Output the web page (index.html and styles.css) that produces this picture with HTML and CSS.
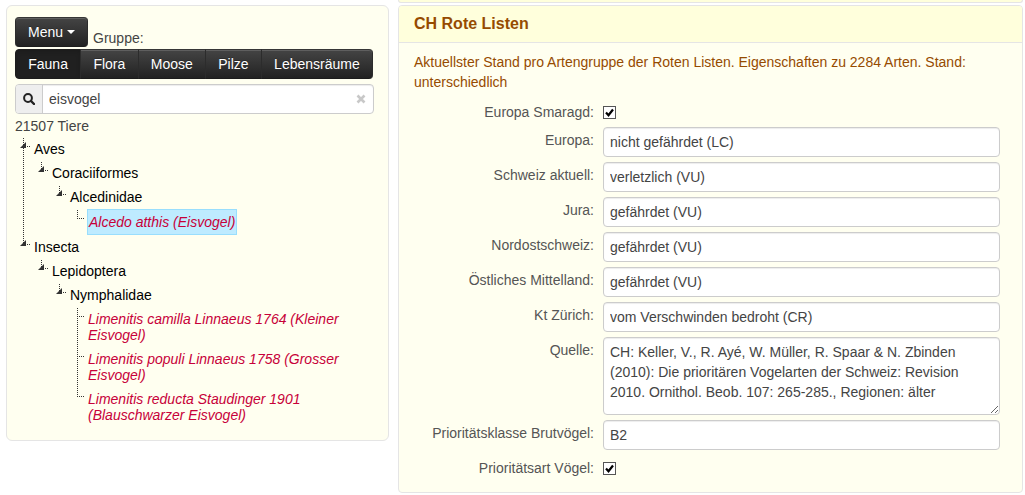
FILE: index.html
```html
<!DOCTYPE html>
<html lang="de">
<head>
<meta charset="utf-8">
<title>Arteigenschaften</title>
<link rel="stylesheet" href="styles.css">
</head>
<body>
<div class="layout">
  <aside class="sidebar">
    <div class="menu-row">
      <button type="button" class="btn btn-menu">Menu<span class="caret"></span></button>
      <span class="group-label" id="group-label">Gruppe:</span>
    </div>
    <div class="btn-group" role="group" aria-labelledby="group-label">
      <button type="button" class="btn active">Fauna</button>
      <button type="button" class="btn">Flora</button>
      <button type="button" class="btn">Moose</button>
      <button type="button" class="btn">Pilze</button>
      <button type="button" class="btn">Lebensräume</button>
    </div>
    <div class="search">
      <label class="search-icon" for="search" aria-label="Suchen">
        <svg width="12" height="12" viewBox="0 0 12 12"><circle cx="5" cy="5" r="3.9" fill="none" stroke="#222" stroke-width="2"/><path d="M8 8l3 3" stroke="#222" stroke-width="2.4" stroke-linecap="round"/></svg>
      </label>
      <input class="search-input" id="search" type="text" value="eisvogel">
      <button type="button" class="search-clear" aria-label="Suche leeren">
        <svg width="10" height="10" viewBox="0 0 10 10"><path d="M1.5 1.5l7 7M8.5 1.5l-7 7" stroke="#c8c8c8" stroke-width="2.6"/></svg>
      </button>
    </div>
    <div class="count">21507 Tiere</div>
    <ul class="tree">
      <li class="node">
        <button type="button" class="toggle" aria-label="Aves zuklappen"><svg width="6" height="6" viewBox="0 0 6 6"><path d="M6 0v6H0z"/></svg></button>
        <div class="node-body"><a class="link" href="#">Aves</a>
          <ul class="tree">
            <li class="node">
              <button type="button" class="toggle" aria-label="Coraciiformes zuklappen"><svg width="6" height="6" viewBox="0 0 6 6"><path d="M6 0v6H0z"/></svg></button>
              <div class="node-body"><a class="link" href="#">Coraciiformes</a>
                <ul class="tree">
                  <li class="node">
                    <button type="button" class="toggle" aria-label="Alcedinidae zuklappen"><svg width="6" height="6" viewBox="0 0 6 6"><path d="M6 0v6H0z"/></svg></button>
                    <div class="node-body"><a class="link" href="#">Alcedinidae</a>
                      <ul class="tree">
                        <li class="node leaf"><div class="node-body"><a class="link species selected" href="#">Alcedo atthis (Eisvogel)</a></div></li>
                      </ul>
                    </div>
                  </li>
                </ul>
              </div>
            </li>
          </ul>
        </div>
      </li>
      <li class="node">
        <button type="button" class="toggle" aria-label="Insecta zuklappen"><svg width="6" height="6" viewBox="0 0 6 6"><path d="M6 0v6H0z"/></svg></button>
        <div class="node-body"><a class="link" href="#">Insecta</a>
          <ul class="tree">
            <li class="node">
              <button type="button" class="toggle" aria-label="Lepidoptera zuklappen"><svg width="6" height="6" viewBox="0 0 6 6"><path d="M6 0v6H0z"/></svg></button>
              <div class="node-body"><a class="link" href="#">Lepidoptera</a>
                <ul class="tree">
                  <li class="node">
                    <button type="button" class="toggle" aria-label="Nymphalidae zuklappen"><svg width="6" height="6" viewBox="0 0 6 6"><path d="M6 0v6H0z"/></svg></button>
                    <div class="node-body"><a class="link" href="#">Nymphalidae</a>
                      <ul class="tree">
                        <li class="node leaf"><div class="node-body"><a class="link species" href="#">Limenitis camilla Linnaeus 1764 (Kleiner Eisvogel)</a></div></li>
                        <li class="node leaf"><div class="node-body"><a class="link species" href="#">Limenitis populi Linnaeus 1758 (Grosser Eisvogel)</a></div></li>
                        <li class="node leaf"><div class="node-body"><a class="link species" href="#">Limenitis reducta Staudinger 1901 (Blauschwarzer Eisvogel)</a></div></li>
                      </ul>
                    </div>
                  </li>
                </ul>
              </div>
            </li>
          </ul>
        </div>
      </li>
    </ul>
  </aside>
  <main class="content">
    <div class="panel-end"></div>
    <section class="panel">
      <h2 class="panel-title">CH Rote Listen</h2>
      <div class="panel-body">
        <p class="description">Aktuellster Stand pro Artengruppe der Roten Listen. Eigenschaften zu 2284 Arten. Stand: unterschiedlich</p>
        <form class="fields">
          <label class="label" for="f1">Europa Smaragd:</label><input class="check" id="f1" type="checkbox" checked>
          <label class="label" for="f2">Europa:</label><input class="field" id="f2" type="text" value="nicht gefährdet (LC)">
          <label class="label" for="f3">Schweiz aktuell:</label><input class="field" id="f3" type="text" value="verletzlich (VU)">
          <label class="label" for="f4">Jura:</label><input class="field" id="f4" type="text" value="gefährdet (VU)">
          <label class="label" for="f5">Nordostschweiz:</label><input class="field" id="f5" type="text" value="gefährdet (VU)">
          <label class="label" for="f6">Östliches Mittelland:</label><input class="field" id="f6" type="text" value="gefährdet (VU)">
          <label class="label" for="f7">Kt Zürich:</label><input class="field" id="f7" type="text" value="vom Verschwinden bedroht (CR)">
          <label class="label" for="f8">Quelle:</label><textarea class="field area" id="f8">CH: Keller, V., R. Ayé, W. Müller, R. Spaar &amp; N. Zbinden (2010): Die prioritären Vogelarten der Schweiz: Revision 2010. Ornithol. Beob. 107: 265-285., Regionen: älter</textarea>
          <label class="label" for="f9">Prioritätsklasse Brutvögel:</label><input class="field" id="f9" type="text" value="B2">
          <label class="label" for="f10">Prioritätsart Vögel:</label><input class="check" id="f10" type="checkbox" checked>
        </form>
      </div>
    </section>
  </main>
</div>
</body>
</html>
```

FILE: styles.css
```css
* {
  box-sizing: border-box;
}

body {
  margin: 0;
  background: #fff;
  color: #444;
  font: 14px/20px "Liberation Sans", Arial, sans-serif;
}

button,
input,
textarea {
  margin: 0;
  font: inherit;
}

.layout {
  display: grid;
  grid-template-columns: 383px minmax(0, 1fr);
  align-items: start;
  gap: 9px;
  padding: 0 2px 0 6px;
}

/* Sidebar */
.sidebar {
  margin-top: 5px;
  padding: 11px 14px 13px 8px;
  border: 1px solid #e5e5e5;
  border-radius: 6px;
  background: #fffff0;
}

.menu-row {
  display: flex;
  align-items: flex-start;
  gap: 5px;
  margin-bottom: 1px;
}

.group-label {
  padding-top: 11px;
}

.btn {
  height: 30px;
  padding: 4px 12px;
  border: 1px solid #222;
  border-color: #363636 #2c2c2c #1c1c1c;
  background: linear-gradient(#444, #222);
  box-shadow: inset 0 1px 0 rgba(255, 255, 255, 0.15);
  color: #fff;
  text-shadow: 0 -1px 0 rgba(0, 0, 0, 0.25);
}

.btn-menu {
  display: flex;
  align-items: center;
  gap: 4px;
  border-radius: 4px;
}

.caret {
  border: 4px solid transparent;
  border-top-color: #fff;
  border-bottom: 0;
}

.btn-group {
  display: flex;
  margin: 0 1px 5px 0;
}

.btn-group .btn {
  flex: 1 1 auto;
}

.btn-group .btn + .btn {
  margin-left: -1px;
}

.btn-group .btn:first-child {
  border-radius: 4px 0 0 4px;
}

.btn-group .btn:last-child {
  border-radius: 0 4px 4px 0;
}

.btn.active {
  border-color: #1c1c1c;
  background: #202020;
  box-shadow: inset 0 2px 4px rgba(0, 0, 0, 0.15);
}

.search {
  display: flex;
  height: 30px;
  margin-bottom: 2px;
  border: 1px solid #ccc;
  border-radius: 4px;
  background: #fff;
  box-shadow: inset 0 1px 1px rgba(0, 0, 0, 0.075);
}

.search-icon {
  display: flex;
  flex: none;
  align-items: center;
  justify-content: center;
  width: 27px;
  border-right: 1px solid #ccc;
  border-radius: 3px 0 0 3px;
  background: #eee;
}

.search-input {
  flex: 1;
  min-width: 0;
  padding: 4px 6px;
  border: 0;
  outline: 0;
  background: transparent;
  color: #444;
}

.search-clear {
  display: flex;
  align-items: center;
  padding: 0 7px;
  border: 0;
  background: none;
}

.count {
  margin-bottom: 1px;
}

/* Tree */
.tree {
  margin: 0;
  padding: 0;
  list-style: none;
}

.node {
  display: flex;
  background:
    repeating-linear-gradient(#333 0 1px, transparent 1px 2px) 8px 1px / 1px 100% no-repeat,
    repeating-linear-gradient(90deg, #333 0 1px, transparent 1px 2px) 8px 9px / 7px 1px no-repeat;
}

.node:last-child {
  background-size: 1px 9px, 7px 1px;
}

.leaf {
  padding-left: 18px;
}

.toggle {
  display: flex;
  flex: none;
  width: 18px;
  height: 24px;
  padding: 5px;
  border: 0;
  background: none;
}

.toggle svg {
  fill: #333;
}

.node-body {
  flex: 1;
  min-width: 0;
}

.link {
  display: block;
  width: fit-content;
  padding: 4px 1px;
  color: #000;
  line-height: 16px;
  text-decoration: none;
}

.species {
  color: #c70039;
  font-style: italic;
}

.selected {
  border: 1px solid #99defd;
  background: #beebff;
}

/* Property panels */
.panel-end {
  height: 3px;
  margin-bottom: 2px;
  border: 1px solid #e5e5e5;
  border-top: 0;
  border-radius: 0 0 4px 4px;
  background: #ffffdc;
}

.panel {
  border: 1px solid #e5e5e5;
  border-radius: 4px;
  background: #fffff0;
}

.panel-title {
  margin: 0;
  padding: 8px 15px;
  border-bottom: 1px solid #e5e5e5;
  border-radius: 3px 3px 0 0;
  background: #ffffdc;
  color: #964b00;
  font-size: 16px;
  line-height: 20px;
}

.panel-body {
  padding: 9px 22px 14px 15px;
}

.description {
  margin: 0 0 7px;
  color: #964b00;
}

.fields {
  display: grid;
  grid-template-columns: 180px minmax(0, 1fr);
  gap: 5px 9px;
}

.label {
  padding-top: 3px;
  color: #555;
  text-align: right;
}

.field {
  width: 100%;
  height: 30px;
  padding: 4px 6px;
  border: 1px solid #ccc;
  border-radius: 4px;
  outline: 0;
  background: #fff;
  box-shadow: inset 0 1px 1px rgba(0, 0, 0, 0.075);
  color: #444;
}

.area {
  display: block;
  height: 78px;
  resize: vertical;
}

.check {
  width: 13px;
  height: 13px;
  margin-top: 7px;
  border: 1px solid #555;
  appearance: none;
  background: #fff;
}

.check:checked {
  background: #fff url("data:image/svg+xml,%3Csvg xmlns='http://www.w3.org/2000/svg' viewBox='0 0 11 11'%3E%3Cpath d='M2 5.5l2.5 2.7L9 2.5' fill='none' stroke='%23000' stroke-width='2.2'/%3E%3C/svg%3E") center / 11px 11px no-repeat;
}
```
